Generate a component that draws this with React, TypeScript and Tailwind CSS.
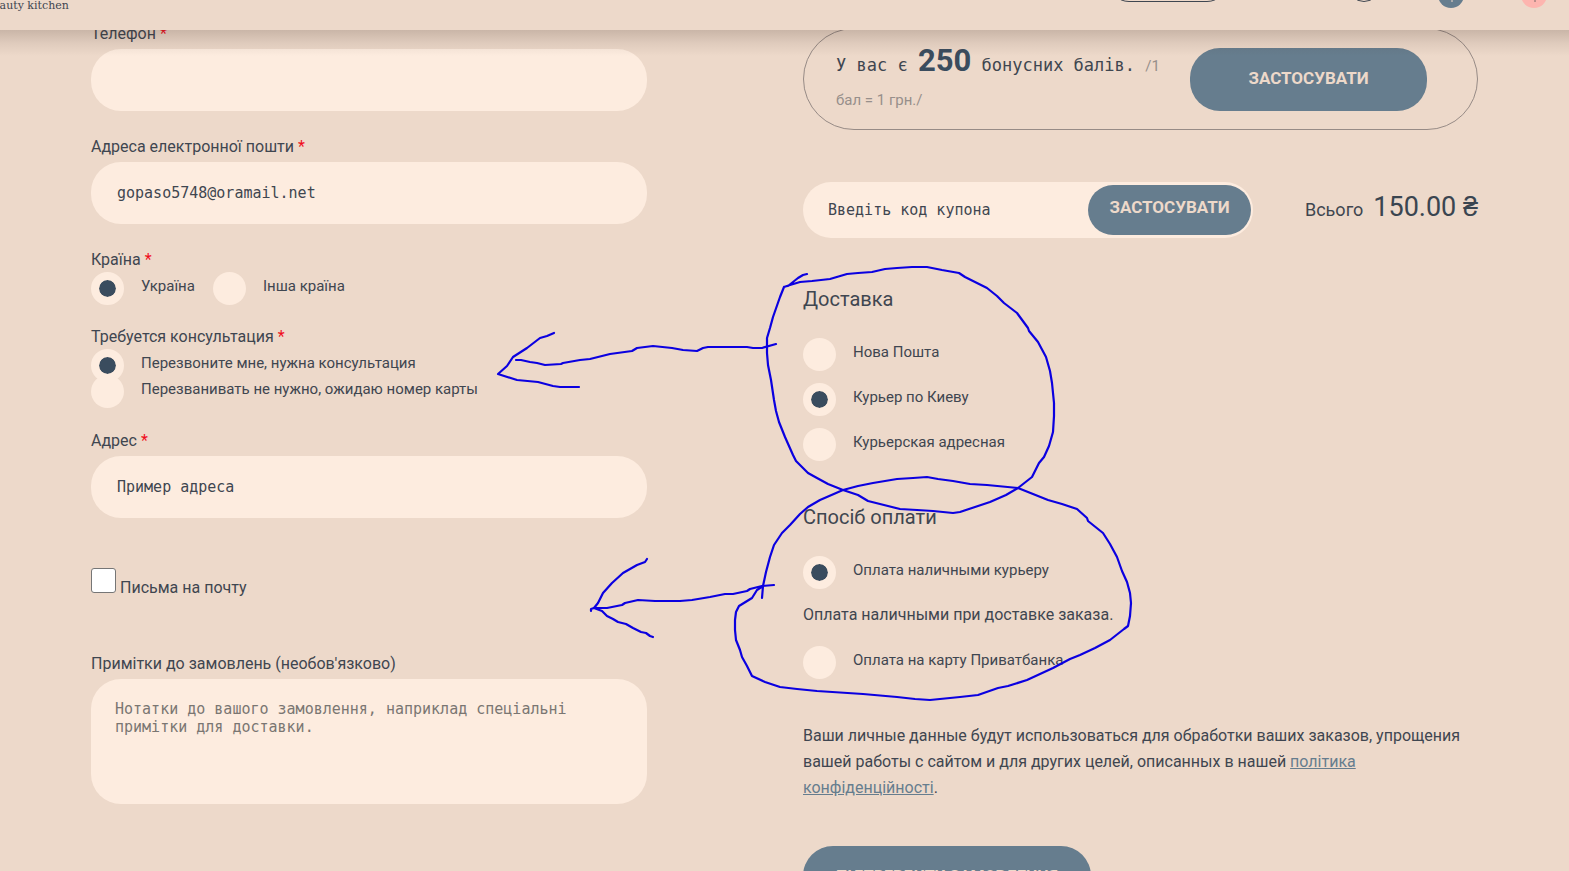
import React from 'react';

const controlClass =
  'block w-full rounded-[30px] bg-[#fdecdf] px-[26px] font-["DejaVu_Sans_Mono",monospace] text-[15px] text-[#3f4650] placeholder:text-[#3f4650] outline-none';

function Required() {
  return <span className="text-[#f00f1c]"> *</span>;
}

type FieldProps = {
  id: string;
  label: string;
  type?: string;
  value?: string;
  placeholder?: string;
};

function Field({ id, label, type = 'text', value, placeholder }: FieldProps) {
  return (
    <div className="flex flex-col gap-px">
      <label htmlFor={id} className="text-base leading-7">
        {label}
        <Required />
      </label>
      <input id={id} type={type} defaultValue={value} placeholder={placeholder} className={`${controlClass} h-[62px]`} />
    </div>
  );
}

function Radio({ name, label, checked = false }: { name: string; label: string; checked?: boolean }) {
  return (
    <label className="flex h-[26px] items-start gap-[17px] text-[15px] leading-7">
      <input
        type="radio"
        name={name}
        defaultChecked={checked}
        className="m-0 size-[33px] shrink-0 appearance-none rounded-full bg-[#fdecdf] checked:border-8 checked:border-[#fdecdf] checked:bg-[#3a4c5e] checked:bg-clip-padding"
      />
      <span>{label}</span>
    </label>
  );
}

function Header() {
  return (
    <header className="absolute inset-x-0 top-0 z-10 bg-[#edd9ca]">
      <div className="relative h-[30px] overflow-hidden">
        <a href="#home" className="absolute -left-[15px] -top-[3px] font-['DejaVu_Serif',serif] text-[11px] leading-[18px]">
          Beauty kitchen
        </a>
        <svg className="absolute right-0 top-0" width="469" height="30" viewBox="1100 0 469 30" fill="none" aria-hidden="true">
          <rect x="1109" y="-40" width="118" height="41.5" rx="20" stroke="#3f4650" />
          <circle cx="1364" cy="-14" r="15.5" stroke="#3f4650" />
          <circle cx="1451" cy="-5" r="13" fill="#667d8e" />
          <path d="M1452 -3V2" stroke="#edd9ca" />
          <circle cx="1534" cy="-5" r="13" fill="#fdb5af" />
          <path d="M1535 -3V2" stroke="#7d6a68" />
        </svg>
      </div>
      <div className="pointer-events-none absolute inset-x-0 top-full h-[26px] bg-linear-to-b from-[#3c281e]/20 via-[#3c281e]/8 to-transparent" />
    </header>
  );
}

function CustomerDetails() {
  return (
    <section className="flex flex-col pt-5">
      <div className="flex flex-col gap-[22px]">
        <Field id="phone" label="Телефон" type="tel" />
        <Field id="email" label="Адреса електронної пошти" type="email" value="gopaso5748@oramail.net" />
        <fieldset>
          <legend className="h-[26px] text-base leading-7">
            Країна
            <Required />
          </legend>
          <div className="flex gap-[18px]">
            <Radio name="country" label="Україна" checked />
            <Radio name="country" label="Інша країна" />
          </div>
        </fieldset>
      </div>
      <fieldset className="mt-[25px]">
        <legend className="h-[26px] text-base leading-7">
          Требуется консультация
          <Required />
        </legend>
        <Radio name="consult" label="Перезвоните мне, нужна консультация" checked />
        <Radio name="consult" label="Перезванивать не нужно, ожидаю номер карты" />
      </fieldset>
      <div className="mt-[26px]">
        <Field id="address" label="Адрес" value="Пример адреса" />
      </div>
      <label className="mt-[50px] flex gap-1 text-base leading-7">
        <input
          type="checkbox"
          className="m-0 size-[25px] shrink-0 appearance-none rounded-[3px] border border-[#767676] bg-white"
        />
        <span className="pt-[6px]">Письма на почту</span>
      </label>
      <div className="mt-12 flex flex-col gap-px">
        <label htmlFor="notes" className="text-base leading-7">
          Примітки до замовлень (необов'язково)
        </label>
        <textarea
          id="notes"
          placeholder="Нотатки до вашого замовлення, наприклад спеціальні примітки для доставки."
          className="block h-[125px] w-full resize-none rounded-[30px] bg-[#fdecdf] px-6 py-[21px] font-['DejaVu_Sans_Mono',monospace] text-[15px] leading-[18px] outline-none placeholder:text-[#7a7672]"
        />
      </div>
    </section>
  );
}

function OrderSummary() {
  return (
    <section className="flex flex-col pt-7">
      <div className="flex h-[102px] items-center rounded-[51px] border border-[#978b86] pl-8 pr-[50px]">
        <p className="min-w-0 flex-1 pr-5 pt-1 leading-[34px]">
          <span className="font-['DejaVu_Sans_Mono',monospace] text-[17px]">У вас є </span>
          <strong className="text-[31px] font-bold leading-none text-[#3a4c5e]">250</strong>
          <span className="font-['DejaVu_Sans_Mono',monospace] text-[17px]"> бонусних балів. </span>
          <span className="text-[15px] text-[#978f8b]">/1 бал = 1 грн./</span>
        </p>
        <button type="button" className="h-[63px] w-[237px] shrink-0 rounded-[30px] bg-[#667d8e] text-[17px] font-bold text-[#edd9ca]">
          ЗАСТОСУВАТИ
        </button>
      </div>

      <div className="mt-[52px] flex items-center justify-between">
        <form className="flex h-14 w-2/3 items-center rounded-[28px] bg-[#fdecdf] pl-[25px] pr-[2px]">
          <input
            type="text"
            aria-label="Код купона"
            placeholder="Введіть код купона"
            className="min-w-0 flex-1 bg-transparent font-['DejaVu_Sans_Mono',monospace] text-[15px] outline-none placeholder:text-[#3f4650]"
          />
          <button type="button" className="h-[50px] w-[163px] shrink-0 rounded-[25px] bg-[#667d8e] pb-1 text-[17px] font-bold text-[#edd9ca]">
            ЗАСТОСУВАТИ
          </button>
        </form>
        <p className="flex items-baseline gap-[10px] pb-[6px]">
          <span className="text-lg">Всього</span>
          <span className="text-[27px] leading-8 text-[#3a4550]">150.00 ₴</span>
        </p>
      </div>

      <fieldset className="mt-12">
        <legend className="text-xl leading-[26px]">Доставка</legend>
        <div className="mt-[26px] flex flex-col gap-[19px]">
          <Radio name="delivery" label="Нова Пошта" />
          <Radio name="delivery" label="Курьер по Киеву" checked />
          <Radio name="delivery" label="Курьерская адресная" />
        </div>
      </fieldset>

      <fieldset className="mt-[50px]">
        <legend className="text-xl leading-[26px]">Спосіб оплати</legend>
        <div className="mt-[26px] flex flex-col gap-[19px]">
          <Radio name="payment" label="Оплата наличными курьеру" checked />
          <p className="h-[26px] text-base leading-7">Оплата наличными при доставке заказа.</p>
          <Radio name="payment" label="Оплата на карту Приватбанка" />
        </div>
      </fieldset>

      <p className="mt-[51px] text-base leading-[26px]">
        Ваши личные данные будут использоваться для обработки ваших заказов, упрощения вашей работы с сайтом и для
        других целей, описанных в нашей{' '}
        <a href="#privacy" className="text-[#667d8e] underline">
          політика конфіденційності
        </a>
        .
      </p>
      <button type="button" className="mt-[45px] h-[62px] w-[288px] rounded-[30px] bg-[#667d8e] text-base font-bold text-[#edd9ca]">
        ПІДТВЕРДИТИ ЗАМОВЛЕННЯ
      </button>
    </section>
  );
}

function PenMarks() {
  return (
    <svg
      className="pointer-events-none absolute left-0 top-0 z-20"
      width="1569"
      height="871"
      viewBox="0 0 1569 871"
      fill="none"
      stroke="#0b00e0"
      strokeWidth="2.2"
      strokeLinecap="round"
      strokeLinejoin="round"
      aria-hidden="true"
    >
      <path d="M807 274L803 275L798 278L788 286M784 287L790 285L800 282L812 281L830 279L847 274L858 273L872 272L885 269L897 268L912 267L927 267L942 270L959 273L965 277L987 288L997 296L1004 303L1017 313L1028 328L1029 331L1038 342L1046 357L1050 371L1052 383L1054 403L1054 416L1053 432L1049 446L1044 457L1039 463L1032 477L1018 488L1006 495L990 502L972 508L960 512L953 513L943 512L933 511L917 510L900 509L884 505L868 501L858 495L843 490L828 484L817 478L808 473L796 461L793 455L785 437L779 422L776 411L774 400L771 380L768 365L767 353L767 338L770 328L773 317L780 297L784 287" />
      <path d="M762 598L763 586L766 572L770 557L774 545L782 533L790 525L800 514L808 507L820 500L843 490L858 486L873 483L897 479L913 478L927 477L938 479L953 481L970 484L987 485L1018 488L1033 494L1048 500L1062 504L1077 509L1087 518L1088 521L1103 533L1110 544L1117 557L1122 571L1127 582L1130 593L1131 603L1130 616L1128 626L1124 629L1110 640L1095 648L1080 655L1070 659L1053 668L1027 680L1008 686L998 688L978 695L960 697L930 700L915 699L897 697L863 694L817 691L797 689L780 687L765 682L752 676L747 666L742 657L740 650L736 640L735 630L735 620L736 612L739 606L752 598L757 590L763 586" />
      <path d="M776 344L762 348L753 348L747 347L708 347L703 348L697 351L683 350L672 348L653 346L637 348L632 351L610 354L590 359L580 360L563 363L561 364L545 365L537 363L530 362L521 360L516 360" />
      <path d="M554 333L547 336L540 338L527 348L513 357L507 366L498 374L517 380L538 382L553 386L560 387L579 387" />
      <path d="M774 585L762 586L750 589L747 591L733 594L725 594L710 597L692 600L680 601L655 601L638 600L625 603L622 605L607 608L594 608L591 609L591 611" />
      <path d="M647 559L645 562L637 565L623 573L612 583L603 593L598 603L594 608L602 611L607 616L613 619L618 622L626 624L633 628L641 632L646 633L650 636L653 637" />
    </svg>
  );
}

export default function App() {
  return (
    <div className="relative h-screen overflow-hidden bg-[#edd9ca] font-['Roboto',sans-serif] text-[#3f4650]">
      <Header />
      <main className="grid grid-cols-[556fr_675fr] gap-[156px] px-[91px]">
        <CustomerDetails />
        <OrderSummary />
      </main>
      <PenMarks />
    </div>
  );
}
